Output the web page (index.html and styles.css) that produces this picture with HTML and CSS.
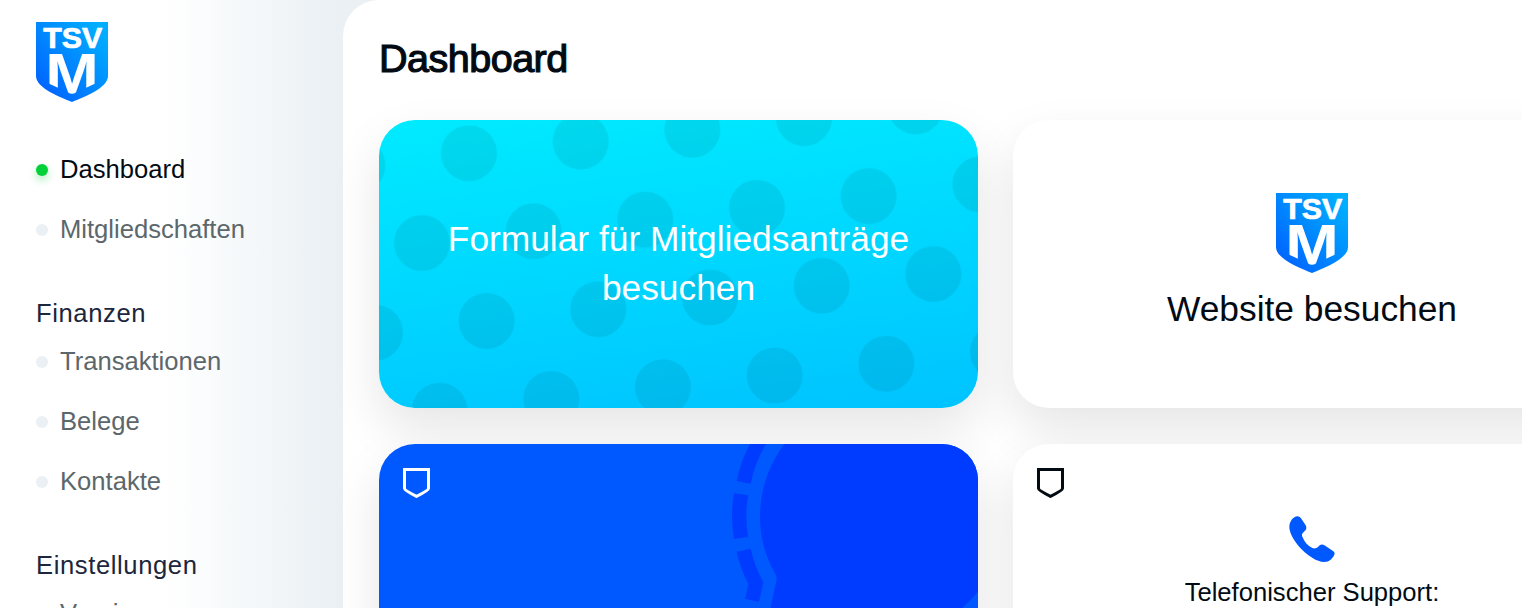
FILE: index.html
```html
<!DOCTYPE html>
<html lang="de">
<head>
<meta charset="utf-8">
<title>Dashboard</title>
<link rel="stylesheet" href="styles.css">
</head>
<body>
<svg class="defs" aria-hidden="true">
  <defs>
    <linearGradient id="crest-fill" x1="0" y1="1" x2="1" y2="0">
      <stop offset="0.15" stop-color="#0068ff"/>
      <stop offset="0.9" stop-color="#00aeff"/>
    </linearGradient>
    <clipPath id="crest-m"><path d="M0 28H72V54L58.700 61.800L40 70.600Q36 73 32 70.600L13.300 61.800L0 54Z"/></clipPath>
    <symbol id="crest" viewBox="0 0 72 80">
      <path d="M0 0H72V54C72 66 48 75 36 80C24 75 0 66 0 54Z" fill="url(#crest-fill)"/>
      <text class="crest-text crest-tsv" x="7.2" y="25.6" font-size="29" textLength="59" lengthAdjust="spacingAndGlyphs">TSV</text>
      <g clip-path="url(#crest-m)"><text class="crest-text" x="9.200" y="72" font-size="56.500" textLength="53.600" lengthAdjust="spacingAndGlyphs">M</text></g>
    </symbol>
    <symbol id="shield" viewBox="0 0 27 30">
      <path d="M1.5 1.5H25.5V20.6Q25.5 22.500 13.5 28.400Q1.5 22.500 1.5 20.600Z" fill="none" stroke="currentColor" stroke-width="3"/>
    </symbol>
  </defs>
</svg>
<div class="app">
  <aside class="sidebar">
    <svg class="crest"><use href="#crest"/></svg>
    <nav class="nav">
      <a class="nav-item active"><span>Dashboard</span></a>
      <a class="nav-item"><span>Mitgliedschaften</span></a>
      <h2 class="nav-title">Finanzen</h2>
      <a class="nav-item"><span>Transaktionen</span></a>
      <a class="nav-item"><span>Belege</span></a>
      <a class="nav-item"><span>Kontakte</span></a>
      <h2 class="nav-title">Einstellungen</h2>
      <a class="nav-item"><span>Verein</span></a>
    </nav>
  </aside>
  <main class="panel">
    <h1 class="title">Dashboard</h1>
    <div class="cards">
      <a class="card card-form">
        <svg class="card-art" viewBox="0 0 599 288">
          <defs>
            <pattern id="dots" width="112.3" height="168.6" patternUnits="userSpaceOnUse" patternTransform="translate(90 33.3) rotate(-6) translate(-28.1 -42.1)">
              <circle cx="28.1" cy="42.1" r="28"/>
              <circle cx="84.25" cy="126.4" r="28"/>
            </pattern>
          </defs>
          <rect class="dots" width="599" height="288" fill="url(#dots)"/>
        </svg>
        <span class="card-label">Formular für Mitgliedsanträge besuchen</span>
      </a>
      <a class="card card-site">
        <svg class="crest"><use href="#crest"/></svg>
        <span class="card-label">Website besuchen</span>
      </a>
      <a class="card card-blue">
        <svg class="card-art" viewBox="0 0 599 288">
          <g fill="#003cff">
            <path d="M405.3 0C389 22 381 47 381 73C381 94 386 112 396.500 130.500Q398 133 397.500 136L391 166L385 200H540Q567 181 583.300 164Q592 156 599 147.700V0Z"/>
            <path d="M371 0H387Q376 18 371.700 39.700L357.700 37Q362 16 371 0Z"/>
            <path d="M355 49.300L369 51.300Q365.800 72 369 93L355 95Q351 72 355 49.300Z"/>
            <path d="M357.700 107.700L371.700 104.700Q375.500 122 384.300 138.300L380 158L366 154.700L369.300 140Q361 124 357.700 107.700Z"/>
          </g>
        </svg>
        <svg class="shield"><use href="#shield"/></svg>
      </a>
      <a class="card card-support">
        <svg class="shield"><use href="#shield"/></svg>
        <svg class="phone" viewBox="867 348 138 138"><path fill="#0059ff" d="M892 349Q899 349 903 355L917 376Q921 383 917 390L909 398Q904 403 907 410C913 425 923 437 937 444Q947 448 954 441L959 436Q965 431 972 435L998 452Q1006 457 1003 464Q1000 472 992 479Q985 486 972 486C950 485 925 468 907 450C885 428 868 401 868 381C868 364 880 350 892 349Z"/></svg>
        <span class="support-label">Telefonischer Support:</span>
      </a>
    </div>
  </main>
</div>
</body>
</html>
```
FILE: styles.css
```css
* { box-sizing: border-box; }
html, body { margin: 0; height: 100%; overflow: hidden; }
body {
  font-family: "Liberation Sans", Arial, sans-serif;
  color: #020b13;
  background: #fff;
}
.defs { position: absolute; width: 0; height: 0; }
.app {
  display: flex;
  height: 608px;
  overflow: hidden;
  background: linear-gradient(90deg, #fff 165px, #f4f8fa 250px, #edf2f5 310px, #eaf0f4 343px);
}
.sidebar { flex: none; width: 343px; padding: 22px 36px 0; }
.crest { display: block; flex: none; width: 72px; height: 80px; }
.crest-text {
  font-family: "Liberation Sans", Arial, sans-serif;
  font-weight: 700;
  fill: #fff;
}
.crest-tsv { stroke: #fff; stroke-width: .7px; }
.nav { display: flex; flex-direction: column; margin-top: 38px; }
.nav-item {
  display: flex;
  align-items: center;
  gap: 12px;
  height: 60px;
  font-size: 25.6px;
  color: #5c676b;
}
.nav-item span { padding-bottom: 2px; }
.nav-item::before {
  content: "";
  width: 12px;
  height: 12px;
  border-radius: 50%;
  background: #eaf0f4;
}
.nav-item.active { color: #020b13; }
.nav-item.active::before { background: #00d138; box-shadow: 0 4px 8px rgba(0, 209, 56, .35); }
.nav-title {
  margin: 36px 0 0;
  height: 36px;
  line-height: 34px;
  font-size: 25.6px;
  font-weight: 400;
  letter-spacing: 0.6px;
  color: #1c263c;
}
.panel {
  flex: 1;
  min-width: 0;
  padding: 34px 36px;
  background: #fff;
  border-radius: 36px 0 0 0;
}
.title {
  margin: 0 0 38px;
  font-size: 39.5px;
  line-height: 48px;
  font-weight: 400;
  letter-spacing: -0.5px;
  -webkit-text-stroke: 1.2px #020b13;
}
.cards {
  display: grid;
  grid-template-columns: 599px 598px;
  grid-auto-rows: 288px;
  gap: 36px 35px;
}
.card {
  position: relative;
  display: flex;
  flex-direction: column;
  align-items: center;
  border-radius: 36px;
  background: #fff;
  box-shadow: 0 22px 50px rgba(0, 8, 6, .1);
}
.card-art { position: absolute; inset: 0; width: 599px; height: 288px; border-radius: 36px; }
.card-form {
  justify-content: center;
  padding: 0 60px 2px;
  color: #fff;
  background: linear-gradient(173deg, #00ebff, #00c3ff);
}
.dots { opacity: .07; }
.card-label {
  position: relative;
  font-size: 35.35px;
  line-height: 49px;
  text-align: center;
}
.card-site { padding-top: 73px; gap: 11px; }
.card-blue { color: #fff; background: #0059ff; }
.shield { position: absolute; left: 24px; top: 24px; width: 27px; height: 30px; }
.phone { width: 46px; height: 46px; margin-top: 72px; }
.support-label { margin-top: 12px; font-size: 25.6px; line-height: 36px; }
```
